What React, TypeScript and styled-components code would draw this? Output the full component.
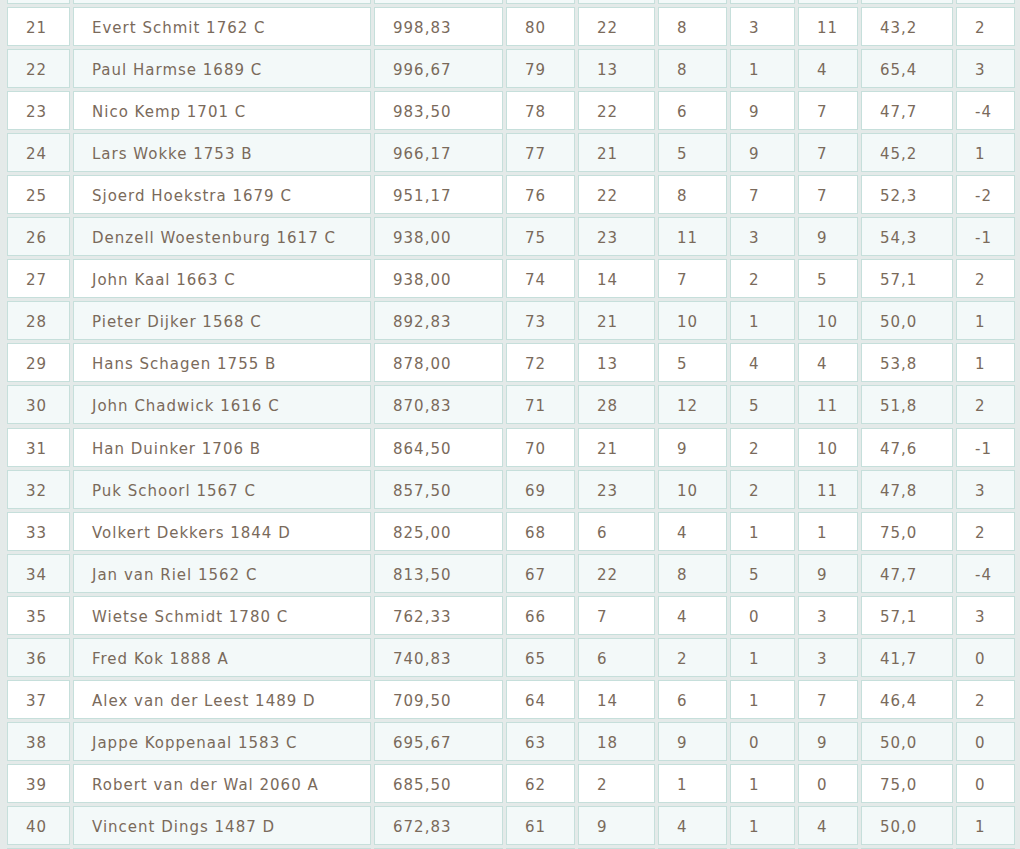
import React from "react";
import styled, { createGlobalStyle } from "styled-components";

const GlobalStyle = createGlobalStyle`
  html, body {
    margin: 0;
    padding: 0;
    background: #e4eae9;
    overflow: hidden;
  }
`;

type Row = [number, string, string, number, number, number, number, number, string, number];

const rows: Row[] = [
  [20, "Gert Visser 1702 C", "1002,17", 81, 20, 8, 4, 8, "50,0", 1],
  [21, "Evert Schmit 1762 C", "998,83", 80, 22, 8, 3, 11, "43,2", 2],
  [22, "Paul Harmse 1689 C", "996,67", 79, 13, 8, 1, 4, "65,4", 3],
  [23, "Nico Kemp 1701 C", "983,50", 78, 22, 6, 9, 7, "47,7", -4],
  [24, "Lars Wokke 1753 B", "966,17", 77, 21, 5, 9, 7, "45,2", 1],
  [25, "Sjoerd Hoekstra 1679 C", "951,17", 76, 22, 8, 7, 7, "52,3", -2],
  [26, "Denzell Woestenburg 1617 C", "938,00", 75, 23, 11, 3, 9, "54,3", -1],
  [27, "John Kaal 1663 C", "938,00", 74, 14, 7, 2, 5, "57,1", 2],
  [28, "Pieter Dijker 1568 C", "892,83", 73, 21, 10, 1, 10, "50,0", 1],
  [29, "Hans Schagen 1755 B", "878,00", 72, 13, 5, 4, 4, "53,8", 1],
  [30, "John Chadwick 1616 C", "870,83", 71, 28, 12, 5, 11, "51,8", 2],
  [31, "Han Duinker 1706 B", "864,50", 70, 21, 9, 2, 10, "47,6", -1],
  [32, "Puk Schoorl 1567 C", "857,50", 69, 23, 10, 2, 11, "47,8", 3],
  [33, "Volkert Dekkers 1844 D", "825,00", 68, 6, 4, 1, 1, "75,0", 2],
  [34, "Jan van Riel 1562 C", "813,50", 67, 22, 8, 5, 9, "47,7", -4],
  [35, "Wietse Schmidt 1780 C", "762,33", 66, 7, 4, 0, 3, "57,1", 3],
  [36, "Fred Kok 1888 A", "740,83", 65, 6, 2, 1, 3, "41,7", 0],
  [37, "Alex van der Leest 1489 D", "709,50", 64, 14, 6, 1, 7, "46,4", 2],
  [38, "Jappe Koppenaal 1583 C", "695,67", 63, 18, 9, 0, 9, "50,0", 0],
  [39, "Robert van der Wal 2060 A", "685,50", 62, 2, 1, 1, 0, "75,0", 0],
  [40, "Vincent Dings 1487 D", "672,83", 61, 9, 4, 1, 4, "50,0", 1],
  [41, "Kees de Boer 1602 C", "660,17", 60, 11, 5, 2, 4, "54,5", 0],
];

// the page is scrolled: only the bottom edge of row 20 shows at the top
const Table = styled.div`
  display: flex;
  flex-direction: column;
  gap: 3.05px;
  margin-top: -35px;
  padding-left: 7px;
`;

const TableRow = styled.div`
  display: grid;
  grid-template-columns: 63px 298px 129px 69px 77px 69px 65px 60px 92px 59px;
  column-gap: 3px;
`;

const Cell = styled.div<{ $alt: boolean }>`
  box-sizing: border-box;
  height: 39px;
  display: flex;
  align-items: center;
  padding: 3px 0 0 18px;
  border: 1px solid #c6dfdb;
  background: ${({ $alt }) => ($alt ? "#f3f9f9" : "#ffffff")};
  color: #7a6a5b;
  font-family: "DejaVu Sans", Verdana, sans-serif;
  font-size: 15px;
  letter-spacing: 1px;
  white-space: nowrap;
  overflow: hidden;
`;

export default function App() {
  return (
    <>
      <GlobalStyle />
      <Table>
        {rows.map((row) => {
          const alt = row[0] % 2 === 0;
          return (
            <TableRow key={row[0]}>
              {row.map((value, i) => (
                <Cell key={i} $alt={alt}>
                  {value}
                </Cell>
              ))}
            </TableRow>
          );
        })}
      </Table>
    </>
  );
}
